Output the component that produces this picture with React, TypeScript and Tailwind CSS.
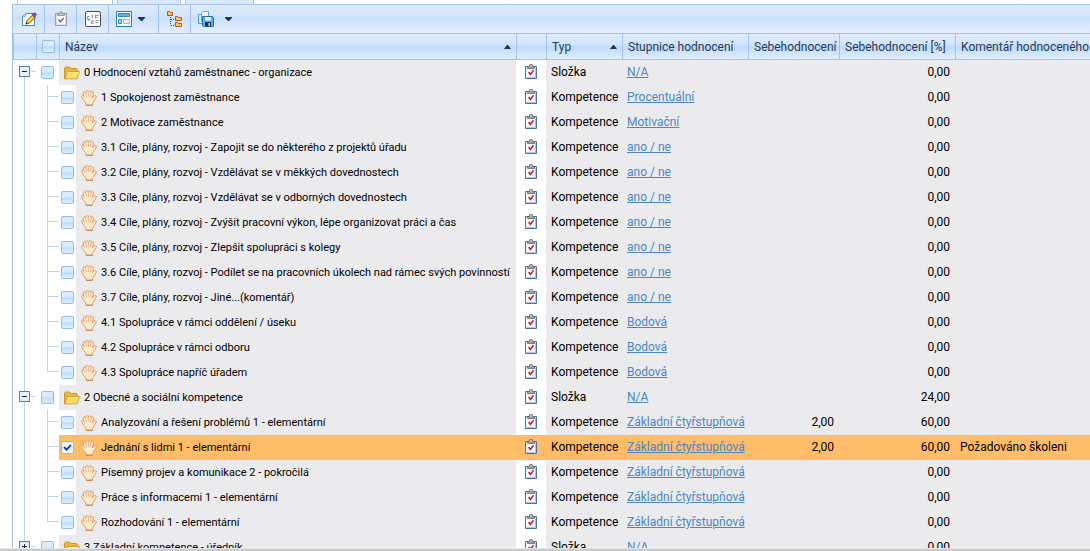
import React from "react";

type Row = {
  level: 0 | 1;
  name: string;
  scale: string;
  self?: string;
  percent: string;
  comment?: string;
  checked?: boolean;
  last?: boolean;
  collapsed?: boolean;
};

const rows: Row[] = [
  { level: 0, name: "0 Hodnocení vztahů zaměstnanec - organizace", scale: "N/A", percent: "0,00" },
  { level: 1, name: "1 Spokojenost zaměstnance", scale: "Procentuální", percent: "0,00" },
  { level: 1, name: "2 Motivace zaměstnance", scale: "Motivační", percent: "0,00" },
  { level: 1, name: "3.1 Cíle, plány, rozvoj - Zapojit se do některého z projektů úřadu", scale: "ano / ne", percent: "0,00" },
  { level: 1, name: "3.2 Cíle, plány, rozvoj - Vzdělávat se v měkkých dovednostech", scale: "ano / ne", percent: "0,00" },
  { level: 1, name: "3.3 Cíle, plány, rozvoj - Vzdělávat se v odborných dovednostech", scale: "ano / ne", percent: "0,00" },
  { level: 1, name: "3.4 Cíle, plány, rozvoj - Zvýšit pracovní výkon, lépe organizovat práci a čas", scale: "ano / ne", percent: "0,00" },
  { level: 1, name: "3.5 Cíle, plány, rozvoj - Zlepšit spolupráci s kolegy", scale: "ano / ne", percent: "0,00" },
  { level: 1, name: "3.6 Cíle, plány, rozvoj - Podílet se na pracovních úkolech nad rámec svých povinností", scale: "ano / ne", percent: "0,00" },
  { level: 1, name: "3.7 Cíle, plány, rozvoj - Jiné...(komentář)", scale: "ano / ne", percent: "0,00" },
  { level: 1, name: "4.1 Spolupráce v rámci oddělení / úseku", scale: "Bodová", percent: "0,00" },
  { level: 1, name: "4.2 Spolupráce v rámci odboru", scale: "Bodová", percent: "0,00" },
  { level: 1, name: "4.3 Spolupráce napříč úřadem", scale: "Bodová", percent: "0,00", last: true },
  { level: 0, name: "2 Obecné a sociální kompetence", scale: "N/A", percent: "24,00" },
  { level: 1, name: "Analyzování a řešení problémů 1 - elementární", scale: "Základní čtyřstupňová", self: "2,00", percent: "60,00" },
  { level: 1, name: "Jednání s lidmi 1 - elementární", scale: "Základní čtyřstupňová", self: "2,00", percent: "60,00", comment: "Požadováno školeni", checked: true },
  { level: 1, name: "Písemný projev a komunikace 2 - pokročilá", scale: "Základní čtyřstupňová", percent: "0,00" },
  { level: 1, name: "Práce s informacemi 1 - elementární", scale: "Základní čtyřstupňová", percent: "0,00" },
  { level: 1, name: "Rozhodování 1 - elementární", scale: "Základní čtyřstupňová", percent: "0,00", last: true },
  { level: 0, name: "3 Základní kompetence - úředník", scale: "N/A", percent: "0,00", collapsed: true },
];

function FolderIcon() {
  return (
    <svg width="16" height="14" viewBox="0 0 16 14" className="shrink-0" aria-hidden="true">
      <path d="M.5 12.5V2L1.6 1h4.2l1.4 1.5h5.3l.8 1V6L2.5 12.8z" fill="#e9b83a" stroke="#c9962a" />
      <path d="M3.3 5.5h12.2l-2.4 7.3H.9z" fill="#fddc6b" stroke="#d4a32f" />
      <path d="M4 6.5h10.2" stroke="#fff0a8" />
    </svg>
  );
}

function HandIcon() {
  return (
    <svg width="16" height="16" viewBox="0 0 16 16" className="shrink-0" aria-hidden="true">
      <path
        d="M4.9 13C3.300 11.600 1.900 9.600.9 7.600.4 6.500.5 5.600 1.200 5.300c.6-.2 1.100.100 1.500.700L2.300 3.800c-.2-1 .1-1.800.9-2 .7-.1 1.200.300 1.500 1.100C4.600 1.500 5 .700 5.900.600c.8 0 1.300.500 1.500 1.500.2-1 .8-1.500 1.600-1.400.8.100 1.200.8 1.100 1.800.4-.7.9-1 1.500-.8.8.2 1 .9.8 1.900l-.9 4.200c.5-.9 1.300-2.100 2.500-2.100 1.300 0 1.800.8 1.200 1.700-1.200 1.600-1.700 3.200-2.900 4.700-.4.500-.7.900-.8 1.400v1.900H5.100c0-1 0-1.800-.2-2.400z"
        fill="#fdebcd"
        stroke="#e09a63"
        strokeLinejoin="round"
      />
      <path d="M2.800 6.200 3.800 8.200M4.800 3.200l.7 3.800M7.400 2.500v4.300M10 3l-.7 4" stroke="#e8a877" strokeWidth=".8" />
      <path d="M5.300 15.200h6" stroke="#c97a48" />
    </svg>
  );
}

function ClipboardIcon() {
  return (
    <svg width="12" height="15" viewBox="0 0 12 15" className="mx-auto block" aria-hidden="true">
      <path d="M.5 2.500h11v12H.5z" fill="#fafcff" stroke="#4672ab" />
      <path d="M1.500 13.500h9v-10" fill="none" stroke="#a9c3e4" />
      <path d="M2.500 4.500v-1.500L4.200 2.500 4.800.6h2.400l.6 1.900 1.700.5v1.500z" fill="#a3a3a3" stroke="#666" strokeWidth=".8" />
      <path d="M5.300 1.800h1.400" stroke="#eee" />
      <path d="m3.700 8 1.700 2.400L8.600 6.200" fill="none" stroke="#c4202a" strokeWidth="1.600" />
    </svg>
  );
}

function EditIcon() {
  return (
    <svg width="16" height="16" viewBox="0 0 16 16" aria-hidden="true">
      <path d="M4.500 2.500h9v12H1.500V5.500z" fill="#fbfdff" stroke="#4e86c6" />
      <path d="M1.500 5.500h3v-3z" fill="#c8dff5" stroke="#6d9bd2" strokeWidth=".8" />
      <path d="m5 13 1-3.500 6-6 2.500 2.500-6 6z" fill="#f4c22d" stroke="#5d471e" strokeWidth=".9" />
      <path d="m7.200 10.800 6-6" stroke="#fff08b" strokeWidth=".9" />
      <path d="m11.200 4.200 1.700-1.800c.6-.6 1.300-.5 1.900.1.600.600.700 1.200.1 1.800l-1.800 1.800z" fill="#6a58c8" stroke="#43358e" strokeWidth=".7" />
      <path d="m4.600 13.400.6-2 1.400 1.400z" fill="#222" />
    </svg>
  );
}

function GrayClipboardIcon() {
  return (
    <svg width="14" height="16" viewBox="0 0 14 16" aria-hidden="true">
      <path d="M1.500 2.500h11v12h-11z" fill="#e2e2e2" stroke="#a2a2a2" strokeWidth="1.200" />
      <path d="M3 4h8v9H3z" fill="#fafafa" />
      <path d="M3.500 4.500v-2h2l.5-1.500h2l.5 1.500h2v2z" fill="#c2c2c2" stroke="#8a8a8a" strokeWidth=".8" />
      <path d="m4.500 8.500 1.900 2.200 3.300-3.700" fill="none" stroke="#777" strokeWidth="1.700" />
    </svg>
  );
}

function NumberingIcon() {
  return (
    <svg width="16" height="16" viewBox="0 0 16 16" aria-hidden="true">
      <rect x=".5" y=".5" width="15" height="15" rx="1.500" fill="#fdfdfd" stroke="#4c4c4c" />
      <path d="M4.500 5.500h-2v3h2M3.500 7.500l1.500 1-1.500 1.500M6.500 4.500l1-.5v3M6.500 9.500h1.500v1.500H6.500v1.500H8.500M10.500 4v3.500M10.500 4.500h3M10.500 6.500h2M10.500 9.500h3M10.500 11.500h2.500" fill="none" stroke="#8a8a8a" strokeWidth=".9" />
    </svg>
  );
}

function LayoutIcon() {
  return (
    <svg width="16" height="16" viewBox="0 0 16 16" aria-hidden="true">
      <path d="M.5.500h15v15H.5z" fill="#fff" stroke="#1f81b8" />
      <path d="M2.500 2.500h11v3h-11z" fill="#65b5de" stroke="#2a8cc0" />
      <path d="M2.500 8.500h3v4h-3z" fill="#a9daf0" stroke="#2a8cc0" />
      <path d="M7.500 8.500h6v4h-6z" fill="#ececec" stroke="#b5b5b5" />
    </svg>
  );
}

function TreeIcon() {
  return (
    <svg width="16" height="16" viewBox="0 0 16 16" aria-hidden="true">
      <path d="M3.500 6v8.500M4 8.500h4M4 14.500h4" fill="none" stroke="#36507c" strokeDasharray="1 1" />
      {["M.5 4.500v-4h2l1 1h2v3z", "M8.500 9.500v-4h2l1 1h3v3z", "M8.500 15.500v-4h2l1 1h3v3z"].map((d) => (
        <path key={d} d={d} fill="#fbc847" stroke="#b5512c" />
      ))}
    </svg>
  );
}

function SaveIcon() {
  return (
    <svg width="16" height="16" viewBox="0 0 16 16" aria-hidden="true">
      <path d="M3 3.500H.5v9H5" fill="#d8edfb" stroke="#4b9bd0" />
      <path d="M3.500 10.500v-8l2-2h5v10z" fill="#f6fbff" stroke="#5ba5d6" />
      <path d="M4.500 5.500h10l1 1v9h-10l-1-1z" fill="#58aee6" stroke="#1c72b4" />
      <path d="M7 6h6v3.500H7z" fill="#eef8ff" />
      <path d="M7 11h6v4.500H7z" fill="#26374b" />
      <path d="M10.500 12h1.500v3h-1.500z" fill="#c8d4de" />
    </svg>
  );
}

function DownArrow() {
  return (
    <svg width="7" height="4" viewBox="0 0 7 4" aria-hidden="true">
      <path d="M0 0h7v1L4 4H3L0 1z" fill="#1e395b" />
    </svg>
  );
}

function SortArrow() {
  return (
    <svg width="7" height="4" viewBox="0 0 7 4" className="shrink-0" aria-hidden="true">
      <path d="M0 4h7L4 0H3z" fill="#1e395b" />
    </svg>
  );
}

function Check({ label, checked }: { label: string; checked?: boolean }) {
  return (
    <label className="relative block size-[13px]">
      <input
        type="checkbox"
        aria-label={label}
        defaultChecked={checked}
        className="peer block size-[13px] appearance-none rounded-[2px] border border-[#96bde9] bg-linear-to-b from-[#d9ebff] from-40% via-[#bcdcff] via-55% to-[#dcf2ff] checked:from-[#e9f5ff] checked:via-[#dceeff] checked:to-[#eef8ff]"
      />
      <svg viewBox="0 0 13 13" className="pointer-events-none absolute inset-0 hidden size-[13px] peer-checked:block" aria-hidden="true">
        <path d="m3 6 2.500 2.700L10 4" fill="none" stroke="#123f75" strokeWidth="1.800" />
      </svg>
    </label>
  );
}

function TreeNode({ first, collapsed }: { first: boolean; collapsed?: boolean }) {
  return (
    <div className="flex h-[25px] flex-col">
      <div className={first ? "h-1.5" : "ml-[11px] h-1.5 border-l border-[#c3d3ea]"} />
      <div className="flex items-center pl-1.5">
        <button
          type="button"
          aria-label={collapsed ? "Rozbalit" : "Sbalit"}
          className="flex size-[11px] shrink-0 items-center justify-center border border-[#4f7fb0] bg-[#e6f1fd]"
        >
          <svg width="7" height="7" viewBox="0 0 7 7" className="shrink-0" aria-hidden="true">
            <path d={collapsed ? "M1 3.500h5M3.500 1v5" : "M1 3.500h5"} stroke="#10263f" />
          </svg>
        </button>
        <div className="ml-px h-px grow bg-[#c3d3ea]" />
      </div>
      <div className="ml-[11px] grow border-l border-[#c3d3ea]" />
    </div>
  );
}

function Tool({ label, arrow, last, children }: { label: string; arrow?: boolean; last?: boolean; children: React.ReactNode }) {
  return (
    <button
      type="button"
      aria-label={label}
      className={
        "flex items-center border-[#a3c3ec] " +
        (last ? "gap-[11px] pl-[7px] pr-2" : arrow ? "gap-1.5 border-r pl-[7px] pr-[13px]" : "w-8 justify-center border-r")
      }
    >
      {children}
      {arrow && <DownArrow />}
    </button>
  );
}

const headCell =
  "border-y border-l border-[#a3c3ec] bg-[linear-gradient(#e3eeff,#cfe2fc_46%,#bcd8fb_48%,#e1efff)] px-[5px] text-left font-normal text-[#283b56]";

export default function App() {
  return (
    <div className="flex h-screen flex-col overflow-hidden bg-white font-[Roboto,sans-serif] text-[12px] leading-4 text-black">
      <div className="ml-3 flex h-1 shrink-0 gap-1 pl-[5px]">
        <button type="button" aria-label="Hodnocení" className="w-24 border-x border-[#a3c3ec] bg-white" />
        <button type="button" aria-label="Cíle" className="w-16 border-x border-[#a3c3ec] bg-[#d9e8fb]" />
        <button type="button" aria-label="Historie" className="w-[69px] border-x border-[#a3c3ec] bg-[#d9e8fb]" />
      </div>
      <div className="ml-3 flex min-h-0 grow flex-col border-l border-t border-[#a3c3ec]">
        <div className="flex h-7 shrink-0 bg-[linear-gradient(#dfeafc,#d3e4fb_42%,#cadffb_44%,#e3eefe)]">
          <Tool label="Upravit"><EditIcon /></Tool>
          <Tool label="Hodnotit"><GrayClipboardIcon /></Tool>
          <Tool label="Číslování"><NumberingIcon /></Tool>
          <Tool label="Rozložení" arrow><LayoutIcon /></Tool>
          <Tool label="Strom"><TreeIcon /></Tool>
          <Tool label="Uložit" arrow last><SaveIcon /></Tool>
        </div>
        <div className="min-h-0 grow overflow-hidden">
          <table className="w-full table-fixed border-separate border-spacing-0 whitespace-nowrap">
            <colgroup>
              <col className="w-[23px]" />
              <col className="w-[23px]" />
              <col className="w-[17px]" />
              <col className="w-[440px]" />
              <col className="w-[30px]" />
              <col className="w-[76px]" />
              <col className="w-[126px]" />
              <col className="w-[91px]" />
              <col className="w-[116px]" />
              <col />
            </colgroup>
            <thead>
              <tr className="h-[27px]">
                <th className={headCell} />
                <th className={headCell}><Check label="Vybrat vše" /></th>
                <th className={headCell} colSpan={2}>
                  <div className="flex items-center justify-between">Název <SortArrow /></div>
                </th>
                <th className={headCell} />
                <th className={headCell}>
                  <div className="flex items-center justify-between">Typ <SortArrow /></div>
                </th>
                <th className={headCell}>Stupnice hodnocení</th>
                <th className={headCell}>Sebehodnocení</th>
                <th className={headCell}>Sebehodnocení [%]</th>
                <th className={headCell}>Komentář hodnoceného</th>
              </tr>
            </thead>
            <tbody>
              {rows.map((r, i) => {
                const bg = r.checked ? "bg-[#ffbd69]" : "bg-[#ebebee]";
                const text = "p-0 align-top leading-6 " + bg;
                return (
                  <tr key={r.name} className="h-[25px]">
                    <td className="p-0">
                      {r.level === 0 ? (
                        <TreeNode first={i === 0} collapsed={r.collapsed} />
                      ) : (
                        <div className="ml-[11px] h-[25px] border-l border-[#c3d3ea]" />
                      )}
                    </td>
                    {r.level === 0 ? (
                      <td className="p-0 pl-[5px]"><Check label={r.name} /></td>
                    ) : (
                      <>
                        <td className="p-0">
                          <div className="ml-[11px] h-3 border-b border-l border-[#c3d3ea]" />
                          <div className={r.last ? "h-[13px]" : "ml-[11px] h-[13px] border-l border-[#c3d3ea]"} />
                        </td>
                        <td className={"p-0 pl-0.5 " + (r.checked ? bg : "")}><Check label={r.name} checked={r.checked} /></td>
                      </>
                    )}
                    <td colSpan={r.level === 0 ? 2 : 1} className={"p-0 pl-[5px] text-[11px] " + bg}>
                      <div className="flex items-center gap-1">
                        {r.level === 0 ? <FolderIcon /> : <HandIcon />}
                        <span>{r.name}</span>
                      </div>
                    </td>
                    <td className={"p-0 pt-1 align-top " + (r.checked ? bg : "")}><ClipboardIcon /></td>
                    <td className={text + " pl-[5px]"}>{r.level === 0 ? "Složka" : "Kompetence"}</td>
                    <td className={text + " pl-[5px]"}>
                      <a href="#" className="text-[#4a86c8] underline">{r.scale}</a>
                    </td>
                    <td className={text + " pr-[5px] text-right"}>{r.self}</td>
                    <td className={text + " pr-[5px] text-right"}>{r.percent}</td>
                    <td className={text + " pl-[5px]"}>{r.comment}</td>
                  </tr>
                );
              })}
            </tbody>
          </table>
        </div>
      </div>
      <div className="h-[3px] shrink-0 border-t border-[#e6e6e6] bg-[#cbcbcb]" />
    </div>
  );
}
